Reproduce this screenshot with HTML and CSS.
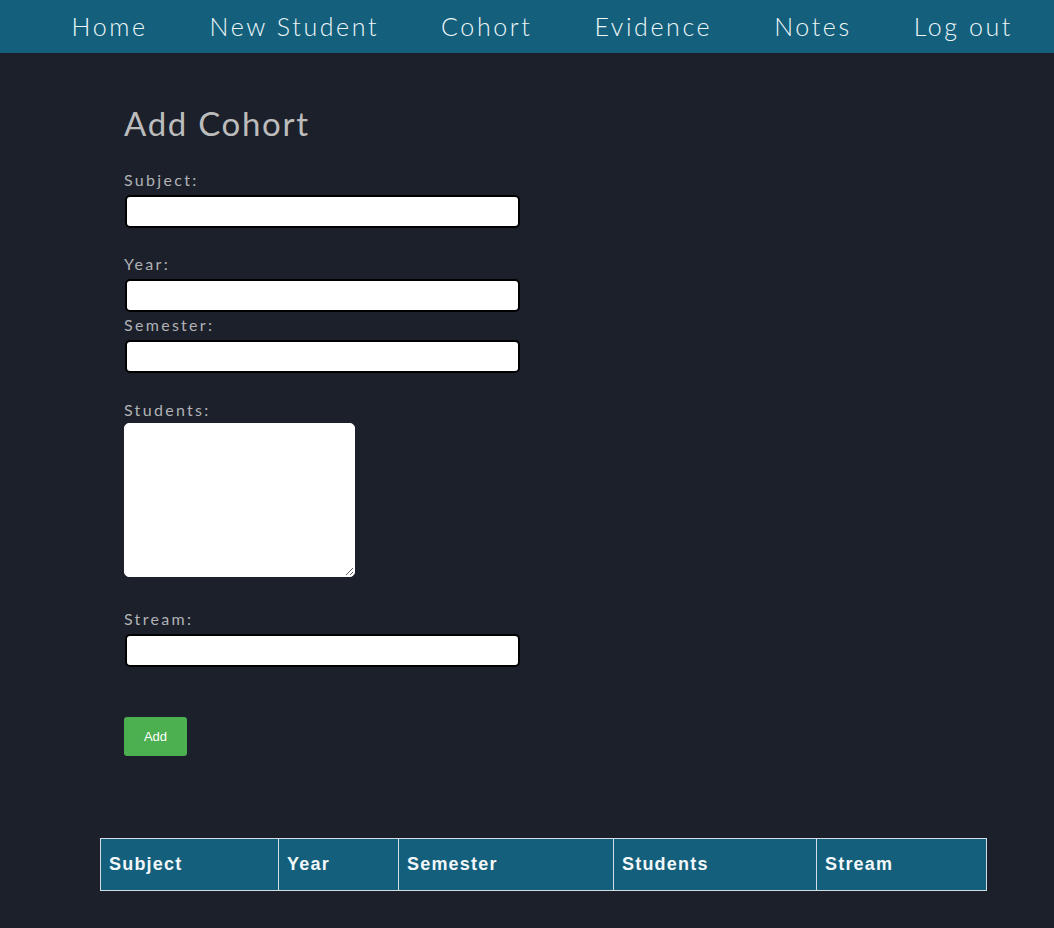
FILE: index.html
```html
<!DOCTYPE html>
<html lang="en">
<head>
<meta charset="utf-8">
<title>Add Cohort</title>
<link rel="stylesheet" href="styles.css">
</head>
<body>
<nav class="topnav">
  <a class="nav-link" href="#">Home</a>
  <a class="nav-link" href="#">New Student</a>
  <a class="nav-link" href="#">Cohort</a>
  <a class="nav-link" href="#">Evidence</a>
  <a class="nav-link" href="#">Notes</a>
  <a class="nav-link" href="#">Log out</a>
</nav>
<main class="page">
  <section class="cohort-form">
    <h2 class="form-title">Add Cohort</h2>
    <form class="form">
      <div class="field field-subject">
        <label class="field-label" for="subject">Subject:</label>
        <input class="text-input" id="subject" type="text">
      </div>
      <div class="field field-year">
        <label class="field-label" for="year">Year:</label>
        <input class="text-input" id="year" type="text">
      </div>
      <div class="field field-semester">
        <label class="field-label" for="semester">Semester:</label>
        <input class="text-input" id="semester" type="text">
      </div>
      <div class="field field-students">
        <label class="field-label" for="students">Students:</label>
        <textarea class="text-area" id="students"></textarea>
      </div>
      <div class="field field-stream">
        <label class="field-label" for="stream">Stream:</label>
        <input class="text-input" id="stream" type="text">
      </div>
      <button class="add-button" type="button">Add</button>
    </form>
  </section>
  <table class="cohort-table">
    <thead>
      <tr>
        <th class="col-subject">Subject</th>
        <th class="col-year">Year</th>
        <th class="col-semester">Semester</th>
        <th class="col-students">Students</th>
        <th class="col-stream">Stream</th>
      </tr>
    </thead>
  </table>
</main>
</body>
</html>
```
FILE: styles.css
```css
html, body {
  margin: 0;
  padding: 0;
}
body {
  background: #1c202b;
  font-family: "Lato", "Open Sans", sans-serif;
  min-height: 928px;
}
.topnav {
  height: 53px;
  background: #135f7c;
  display: flex;
  justify-content: flex-end;
  align-items: center;
  gap: 62px;
  padding-right: 41px;
}
.nav-link {
  color: #eef6f8;
  text-decoration: none;
  font-size: 25px;
  font-weight: 300;
  letter-spacing: 2.6px;
  line-height: 49px;
}
.page {
  padding-top: 50px;
}
.cohort-form {
  margin-left: 124px;
}
.form-title {
  margin: 0;
  font-size: 33px;
  line-height: 40px;
  font-weight: 400;
  color: #bcbcbc;
  letter-spacing: 1.7px;
}
.form {
  display: flex;
  flex-direction: column;
  align-items: flex-start;
  margin-top: 27px;
}
.field {
  display: flex;
  flex-direction: column;
  align-items: flex-start;
}
.field-year { margin-top: 26px; }
.field-semester { margin-top: 3px; }
.field-students { margin-top: 27px; }
.field-stream { margin-top: 32px; }
.field-label {
  font-size: 16px;
  line-height: 20px;
  color: #b0b2b5;
  letter-spacing: 2.3px;
  margin-bottom: 5px;
}
.text-input {
  box-sizing: border-box;
  width: 395px;
  height: 33px;
  margin: 0 0 0 1px;
  border: 2px solid #000;
  border-radius: 5px;
  background: #fff;
  font-size: 16px;
}
.text-area {
  box-sizing: border-box;
  width: 231px;
  height: 154px;
  margin: -2px 0 0 0;
  border: 1px solid #fff;
  border-radius: 5px;
  background: #fff;
  display: block;
}
.add-button {
  margin-top: 50px;
  width: 63px;
  height: 39px;
  background: #4caf50;
  color: #fff;
  border: none;
  border-radius: 3px;
  font-family: "Liberation Sans", Arial, sans-serif;
  font-size: 13px;
  padding: 0;
}
.cohort-table {
  margin: 82px 0 0 100px;
  width: 886px;
  border-collapse: collapse;
  background: #135f7c;
  table-layout: fixed;
}
.cohort-table th {
  box-sizing: border-box;
  border: 1px solid #d2dde4;
  height: 52px;
  padding: 0 8px;
  text-align: left;
  color: #f2f7f9;
  font-family: "Liberation Sans", Arial, sans-serif;
  font-size: 18px;
  font-weight: 700;
  letter-spacing: 1.2px;
}
.col-subject { width: 178px; }
.col-year { width: 120px; }
.col-semester { width: 215px; }
.col-students { width: 203px; }
.col-stream { width: 170px; }
```
